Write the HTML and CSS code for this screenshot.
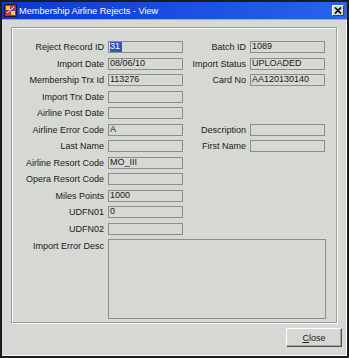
FILE: index.html
```html
<!doctype html>
<html>
<head>
	<title>Membership Airline Rejects - View</title>
	<meta charset="utf-8" />
	<link rel="stylesheet" href="styles.css">
</head>
<body>
	<div id="window">
		<div id="titlebar">
			<svg class="appicon" width="13" height="13" viewBox="0 0 13 13">
				<rect x="0.5" y="0.5" width="12" height="12" fill="#7a3a8c" stroke="#2a1030"/>
				<rect x="2" y="2" width="4" height="4" fill="#f2d030"/>
				<rect x="7" y="2" width="4" height="4" fill="#e03030"/>
				<rect x="2" y="7" width="4" height="4" fill="#e03030"/>
				<rect x="7" y="7" width="4" height="4" fill="#f2d030"/>
				<path d="M3 9 L10 3" stroke="#ffffff" stroke-width="1"/>
			</svg>
			<span class="title">Membership Airline Rejects - View</span>
			<div class="closebox">
				<svg width="8" height="7" viewBox="0 0 8 7">
					<path d="M1 0.5 L7 6.5 M7 0.5 L1 6.5" stroke="#000" stroke-width="1.6"/>
				</svg>
			</div>
		</div>

		<div id="panel">
			<div class="form">
				<label>Reject Record ID</label>
				<div class="field"><span class="selected">31</span></div>
				<label>Batch ID</label>
				<div class="field">1089</div>

				<label>Import Date</label>
				<div class="field">08/06/10</div>
				<label>Import Status</label>
				<div class="field">UPLOADED</div>

				<label>Membership Trx Id</label>
				<div class="field">113276</div>
				<label>Card No</label>
				<div class="field">AA120130140</div>

				<label>Import Trx Date</label>
				<div class="field"></div>
				<span></span><span></span>

				<label>Airline Post Date</label>
				<div class="field"></div>
				<span></span><span></span>

				<label>Airline Error Code</label>
				<div class="field">A</div>
				<label>Description</label>
				<div class="field"></div>

				<label>Last Name</label>
				<div class="field"></div>
				<label>First Name</label>
				<div class="field"></div>

				<label>Airline Resort Code</label>
				<div class="field">MO_III</div>
				<span></span><span></span>

				<label>Opera Resort Code</label>
				<div class="field"></div>
				<span></span><span></span>

				<label>Miles Points</label>
				<div class="field">1000</div>
				<span></span><span></span>

				<label>UDFN01</label>
				<div class="field">0</div>
				<span></span><span></span>

				<label>UDFN02</label>
				<div class="field"></div>
				<span></span><span></span>

				<label class="top">Import Error Desc</label>
				<div class="field textarea"></div>
			</div>
		</div>

		<div id="footer">
			<button type="button"><u>C</u>lose</button>
		</div>
	</div>
</body>
</html>
```

FILE: styles.css
```css
body {
	margin:0;
	padding:0;
	font-family:"Liberation Sans", Arial, sans-serif;
	font-size:9px;
	color:#1a1a1a;
	background-color:#d6d8d3;
}

#window {
	width:349px;
	height:358px;
	box-sizing:border-box;
	border:2px solid #1c1c1c;
	box-shadow:inset -1px -1px 0 #ffffff;
	background-color:#d6d8d3;
}

#titlebar {
	height:17px;
	display:flex;
	align-items:center;
	padding:0 3px 0 2px;
	background:linear-gradient(to right, #0b38d6, #2a62ec);
	border-bottom:1px solid #a8aaa6;
	color:white;
}

.appicon {
	flex:none;
}

.title {
	margin-left:2px;
	font-size:9.2px;
	flex:1;
}

.closebox {
	width:12px;
	height:11px;
	box-sizing:border-box;
	display:flex;
	align-items:center;
	justify-content:center;
	background-color:#d6d8d3;
	border:1px solid;
	border-color:#ffffff #404040 #404040 #ffffff;
}

#panel {
	margin:7px 9px 0 9px;
	width:326px;
	height:296px;
	box-sizing:border-box;
	border:1px solid #9a9c98;
	box-shadow:inset 1px 1px 0 #ffffff, 1px 1px 0 #ffffff;
	padding:13px 0 0 1px;
}

.form {
	display:grid;
	grid-template-columns:91px 75px 59px 75px;
	grid-auto-rows:12px;
	column-gap:4px;
	row-gap:4.5px;
}

.form label {
	text-align:right;
	line-height:12px;
	white-space:nowrap;
}

.form label.top {
	line-height:10px;
	padding-top:2px;
}

.field {
	box-sizing:border-box;
	height:12px;
	border:1px solid #8c8e8a;
	padding:0 0 0 1px;
	line-height:9px;
	white-space:nowrap;
	overflow:hidden;
}

.selected {
	display:inline-block;
	background-color:#3352c6;
	color:white;
	padding:0 2px 0 0;
	height:10px;
}

.textarea {
	grid-column:2 / 5;
	height:80px;
	margin-right:-1px;
}

#footer {
	display:flex;
	justify-content:flex-end;
	padding:5px 5px 0 0;
}

#footer button {
	width:56px;
	height:19px;
	font-family:"Liberation Sans", Arial, sans-serif;
	font-size:9px;
	color:#1a1a1a;
	background-color:#d6d8d3;
	border:1px solid;
	border-color:#ffffff #505050 #505050 #ffffff;
	box-shadow:inset -1px -1px 0 #a0a29e;
	padding:0;
}
```
